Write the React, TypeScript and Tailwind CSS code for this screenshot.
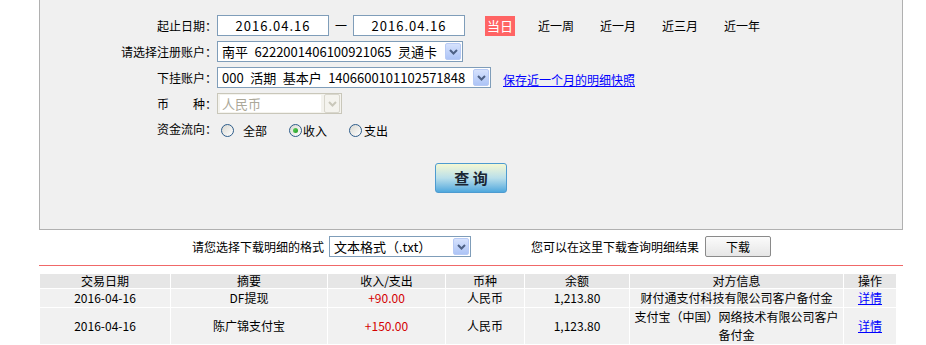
import React from "react";

const Chevron = ({ color }: { color: string }) => (
  <svg width="9" height="6" viewBox="0 0 9 6">
    <path d="M1 1 L4.5 4.5 L8 1" fill="none" stroke={color} strokeWidth="2" />
  </svg>
);

function DropBtn({ disabled }: { disabled?: boolean }) {
  if (disabled) {
    return (
      <span className="flex h-[19px] w-[16px] items-center justify-center rounded-[2px] border border-[#d8d6cc] bg-[#f4f3ee]">
        <Chevron color="#c9c7ba" />
      </span>
    );
  }
  return (
    <span className="flex h-[17px] w-[16px] items-center justify-center rounded-[2px] border border-[#b7caf5] bg-linear-to-b from-[#d6e2fd] to-[#adc4f6]">
      <Chevron color="#4d6185" />
    </span>
  );
}

function Select({
  widthClass,
  text,
  disabled,
}: {
  widthClass: string;
  text: string;
  disabled?: boolean;
}) {
  if (disabled) {
    return (
      <div
        className={`flex h-[21px] items-center justify-between border border-[#c9c7ba] bg-[#f4f3ee] pr-[1px] ${widthClass}`}
      >
        <span className="ml-[2px] flex h-[17px] flex-1 items-center bg-white pl-[2px] text-[13px] text-[#aca899]">
          {text}
        </span>
        <span className="ml-[3px]">
          <DropBtn disabled />
        </span>
      </div>
    );
  }
  return (
    <div
      className={`flex h-[21px] items-center justify-between border border-[#7f9db9] bg-white pr-[1px] ${widthClass}`}
    >
      <span className="whitespace-pre pl-[4px] text-[13px] text-black">{text}</span>
      <DropBtn />
    </div>
  );
}

function Radio({ checked }: { checked?: boolean }) {
  return (
    <span className="flex h-[13px] w-[13px] items-center justify-center rounded-full border border-[#2c5c8a] bg-linear-to-br from-[#d9d8d1] to-white">
      {checked && (
        <span className="h-[5px] w-[5px] rounded-full bg-linear-to-br from-[#5fd35f] to-[#1f9a1f]" />
      )}
    </span>
  );
}

const Label = ({ children }: { children: React.ReactNode }) => (
  <div className="w-[177px] shrink-0 whitespace-pre text-right text-[12px] text-black">
    {children}
  </div>
);

const headers = ["交易日期", "摘要", "收入/支出", "币种", "余额", "对方信息", "操作"];

const rows = [
  {
    date: "2016-04-16",
    memo: "DF提现",
    amt: "+90.00",
    cur: "人民币",
    bal: "1,213.80",
    party: "财付通支付科技有限公司客户备付金",
    tall: false,
  },
  {
    date: "2016-04-16",
    memo: "陈广锦支付宝",
    amt: "+150.00",
    cur: "人民币",
    bal: "1,123.80",
    party: "支付宝（中国）网络技术有限公司客户备付金",
    tall: true,
  },
];

export default function App() {
  return (
    <div
      className="h-[345px] w-[926px] overflow-hidden bg-white text-[12px] text-black"
      style={{ fontFamily: '"Noto Sans CJK SC", "Liberation Sans", sans-serif' }}
    >
      {/* Query panel */}
      <div className="ml-[39px] h-[230px] w-[864px] border-x border-b border-[#b0b0b0] bg-[#f0f0f0] pt-[15px]">
        {/* Row 1 */}
        <div className="flex h-[21px] items-center">
          <Label>起止日期：</Label>
          <div className="flex h-[21px] w-[112px] items-center justify-center border border-[#7f9db9] bg-white text-[13px] tracking-[1px]">
            2016.04.16
          </div>
          <span className="mx-[6px] w-[12px] text-[12px]">一</span>
          <div className="flex h-[21px] w-[112px] items-center justify-center border border-[#7f9db9] bg-white text-[13px] tracking-[1px]">
            2016.04.16
          </div>
          <span className="ml-[20px] flex h-[20px] w-[30px] items-center justify-center bg-[#ff6464] text-[13px] text-white">
            当日
          </span>
          <span className="ml-[23px] w-[36px]">近一周</span>
          <span className="ml-[26px] w-[36px]">近一月</span>
          <span className="ml-[26px] w-[36px]">近三月</span>
          <span className="ml-[26px] w-[36px]">近一年</span>
        </div>

        {/* Row 2 */}
        <div className="mt-[5px] flex h-[21px] items-center">
          <Label>请选择注册账户：</Label>
          <Select widthClass="w-[246px]" text={"南平\u20026222001406100921065\u2002灵通卡"} />
        </div>

        {/* Row 3 */}
        <div className="mt-[5px] flex h-[21px] items-center">
          <Label>下挂账户：</Label>
          <Select
            widthClass="w-[274px]"
            text={"000\u2002活期\u2002基本户\u20021406600101102571848"}
          />
          <a className="ml-[12px] mt-[4px] text-[12px] text-[#0000ff] underline" href="#">
            保存近一个月的明细快照
          </a>
        </div>

        {/* Row 4 */}
        <div className="mt-[5px] flex h-[21px] items-center">
          <Label>{"币　　种："}</Label>
          <Select widthClass="w-[125px]" text="人民币" disabled />
        </div>

        {/* Row 5 */}
        <div className="mt-[6px] flex h-[21px] items-center">
          <Label>
            <span className="relative -top-[2px]">资金流向：</span>
          </Label>
          <div className="ml-[4px] flex items-center">
            <Radio />
            <span className="ml-[9px]">全部</span>
          </div>
          <div className="ml-[22px] flex items-center">
            <Radio checked />
            <span className="ml-[1px]">收入</span>
          </div>
          <div className="ml-[22px] flex items-center">
            <Radio />
            <span className="ml-[2px]">支出</span>
          </div>
        </div>

        {/* Button */}
        <div className="mt-[22px] flex justify-center">
          <button className="flex h-[30px] w-[72px] items-center justify-center rounded-[3px] border border-[#4d9bd0] bg-linear-to-b from-[#f5f8d3] via-[#b9dfea] to-[#4ea8dd] text-[15px] font-bold text-[#1b2633]">
            查&nbsp;询
          </button>
        </div>
      </div>

      {/* Download row */}
      <div className="ml-[39px] mt-[6px] flex h-[21px] w-[864px] items-center pl-[153px]">
        <span className="w-[132px] whitespace-nowrap">请您选择下载明细的格式</span>
        <div className="ml-[5px]">
          <Select widthClass="w-[142px]" text="文本格式（.txt）" />
        </div>
        <span className="ml-[60px] w-[168px] whitespace-nowrap">您可以在这里下载查询明细结果</span>
        <button className="ml-[6px] flex h-[21px] w-[66px] items-center justify-center rounded-[2px] border border-[#8a8a8a] bg-linear-to-b from-[#fbfbfb] to-[#e6e6e6] text-[12px]">
          下载
        </button>
      </div>

      {/* Red line */}
      <div className="ml-[39px] mt-[8px] h-px w-[864px] bg-[#f06868]" />

      {/* Table */}
      <div className="ml-[40px] mt-[8px] grid w-[856px] grid-cols-[130px_156px_117px_78px_104px_213px_52px] gap-[1px] bg-white text-center">
        {headers.map((h) => (
          <div key={h} className="flex h-[14px] items-center justify-center bg-[#e6e6e6] leading-[14px]">
            {h}
          </div>
        ))}
        {rows.map((r, i) => (
          <React.Fragment key={i}>
            <div className={`flex items-center justify-center bg-[#f1f1f1] ${r.tall ? "h-[36px]" : "h-[18px]"}`}>
              {r.date}
            </div>
            <div className="flex items-center justify-center bg-[#f1f1f1]">{r.memo}</div>
            <div className="flex items-center justify-center bg-[#f1f1f1] text-[#d40000]">{r.amt}</div>
            <div className="flex items-center justify-center bg-[#f1f1f1]">{r.cur}</div>
            <div className="flex items-center justify-center bg-[#f1f1f1]">{r.bal}</div>
            <div className="flex items-center justify-center bg-[#f1f1f1] px-[2px] leading-[18px]">{r.party}</div>
            <div className="flex items-center justify-center bg-[#f1f1f1]">
              <a href="#" className="text-[#0000ff] underline">
                详情
              </a>
            </div>
          </React.Fragment>
        ))}
      </div>
    </div>
  );
}
